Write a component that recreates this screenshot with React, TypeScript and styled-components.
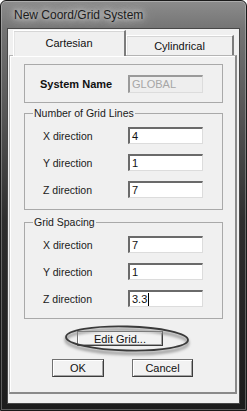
import React from "react";
import styled, { createGlobalStyle } from "styled-components";

const Global = createGlobalStyle`
  html, body { margin: 0; padding: 0; background: #ffffff; }
  body { font-family: "Liberation Sans", Arial, sans-serif; }
  * { box-sizing: border-box; }
`;

const Window = styled.div`
  width: 247px;
  height: 411px;
  border: 1px solid #1a1a1a;
  border-radius: 6px 6px 0 0;
  background: linear-gradient(
    to bottom,
    #8c8c8c 0px,
    #747474 28px,
    #5a5a5a 100px,
    #2e2e2e 220px,
    #1c1c1c 100%
  );
  box-shadow: inset 0 0 0 1px rgba(255, 255, 255, 0.28);
  padding: 0 6px 6px;
  display: flex;
  flex-direction: column;
`;

const TitleBar = styled.div`
  height: 27px;
  display: flex;
  align-items: center;
  padding-left: 7px;
  font-size: 12px;
  color: #1c1c1c;
  text-shadow: 0 0 5px #d4d4d4, 0 0 9px #cdcdcd, 0 0 14px #c4c4c4;
`;

const Client = styled.div`
  flex: 1;
  background: #f0f0f0;
  border: 1px solid #484848;
  display: flex;
  flex-direction: column;
  padding: 0 2px 9px 1px;
`;

const TabStrip = styled.div`
  height: 26px;
  display: flex;
  align-items: flex-end;
  padding-left: 4px;
  position: relative;
  z-index: 1;
`;

const Tab = styled.div<{ $active?: boolean; $w: number }>`
  width: ${(p) => p.$w}px;
  height: ${(p) => (p.$active ? 26 : 20)}px;
  margin-bottom: ${(p) => (p.$active ? -1 : 0)}px;
  background: #f0f0f0;
  border-top: 1px solid #ffffff;
  border-left: 1px solid #ffffff;
  border-right: 2px solid #7c7c7c;
  box-shadow: inset 0 1px 0 #d6d6d6, inset 1px 0 0 #e4e4e4;
  display: flex;
  align-items: center;
  justify-content: center;
  font-size: 11px;
  color: #111;
  padding-bottom: ${(p) => (p.$active ? 1 : 0)}px;
`;

const Panel = styled.div`
  flex: 1;
  border-top: 1px solid #b4b4b4;
  border-left: 1px solid #b4b4b4;
  border-right: 2px solid #8a8a8a;
  border-bottom: 2px solid #8a8a8a;
  box-shadow: inset 1px 1px 0 #ffffff;
  padding: 8px 0 0 14px;
  display: flex;
  flex-direction: column;
  align-items: flex-start;
`;

const NameGroup = styled.div`
  width: 199px;
  height: 39px;
  border: 1px solid #a9a9a9;
  display: flex;
  align-items: center;
  padding-left: 15px;
`;

const BoldLabel = styled.span`
  width: 88px;
  font-size: 11px;
  font-weight: bold;
  color: #111;
`;

const Group = styled.fieldset<{ $top: number }>`
  width: 199px;
  margin: ${(p) => p.$top}px 0 0 0;
  padding: 7px 0 11px 18px;
  border: 1px solid #a9a9a9;
  min-width: 0;
  display: flex;
  flex-direction: column;
  gap: 10px;
`;

const Legend = styled.legend`
  font-size: 10.5px;
  line-height: 13px;
  color: #1a1a1a;
  padding: 0 1px;
  margin-left: -10px;
`;

const Row = styled.div`
  display: flex;
  align-items: center;
  height: 17px;
`;

const Label = styled.span`
  width: 85px;
  font-size: 10.5px;
  color: #1a1a1a;
`;

const Field = styled.div<{ $disabled?: boolean }>`
  width: 75px;
  height: ${(p) => (p.$disabled ? 18 : 17)}px;
  border-top: 2px solid ${(p) => (p.$disabled ? "#9a9a9a" : "#6a6a6a")};
  border-left: 2px solid ${(p) => (p.$disabled ? "#9a9a9a" : "#6a6a6a")};
  border-right: 1px solid #dcdcdc;
  border-bottom: 1px solid #dcdcdc;
  background: ${(p) => (p.$disabled ? "#eeeeee" : "#ffffff")};
  color: ${(p) => (p.$disabled ? "#a6a6a6" : "#111")};
  font-size: 11px;
  line-height: 13px;
  padding-left: 2px;
  display: flex;
  align-items: center;
`;

const Caret = styled.span`
  display: inline-block;
  width: 1px;
  height: 13px;
  background: #000;
  margin-left: 1px;
`;

const EditWrap = styled.div`
  position: relative;
  margin: 12px 0 0 53px;
`;

const Button = styled.button<{ $w: number; $h: number }>`
  width: ${(p) => p.$w}px;
  height: ${(p) => p.$h}px;
  padding: 0;
  font-family: "Liberation Sans", Arial, sans-serif;
  font-size: 11px;
  color: #111;
  background: #f2f2f2;
  border: 1px solid #707070;
  border-right-color: #3c3c3c;
  border-bottom-color: #3c3c3c;
  box-shadow: inset 1px 1px 0 #ffffff, inset -1px -1px 0 #a4a4a4;
  display: flex;
  align-items: center;
  justify-content: center;
`;

const Ring = styled.svg`
  position: absolute;
  left: -14px;
  top: -7px;
  width: 128px;
  height: 32px;
  overflow: visible;
  pointer-events: none;
`;

const ButtonRow = styled.div`
  display: flex;
  gap: 28px;
  margin: 13px 0 0 28px;
`;

export default function App() {
  return (
    <>
      <Global />
      <Window>
        <TitleBar>New Coord/Grid System</TitleBar>
        <Client>
          <TabStrip>
            <Tab $active $w={113}>Cartesian</Tab>
            <Tab $w={108}>Cylindrical</Tab>
          </TabStrip>
          <Panel>
            <NameGroup>
              <BoldLabel>System Name</BoldLabel>
              <Field $disabled>GLOBAL</Field>
            </NameGroup>

            <Group $top={4}>
              <Legend>Number of Grid Lines</Legend>
              <Row>
                <Label>X direction</Label>
                <Field>4</Field>
              </Row>
              <Row>
                <Label>Y direction</Label>
                <Field>1</Field>
              </Row>
              <Row>
                <Label>Z direction</Label>
                <Field>7</Field>
              </Row>
            </Group>

            <Group $top={6}>
              <Legend>Grid Spacing</Legend>
              <Row>
                <Label>X direction</Label>
                <Field>7</Field>
              </Row>
              <Row>
                <Label>Y direction</Label>
                <Field>1</Field>
              </Row>
              <Row>
                <Label>Z direction</Label>
                <Field>
                  3.3
                  <Caret />
                </Field>
              </Row>
            </Group>

            <EditWrap>
              <Button $w={86} $h={15}>Edit Grid...</Button>
              <Ring viewBox="0 0 128 32">
                <defs>
                  <filter id="soft" x="-20%" y="-50%" width="140%" height="200%">
                    <feGaussianBlur stdDeviation="1.6" />
                  </filter>
                </defs>
                <ellipse
                  cx="64"
                  cy="17.5"
                  rx="61"
                  ry="12"
                  fill="none"
                  stroke="#8a8a8a"
                  strokeWidth="2.5"
                  filter="url(#soft)"
                  transform="rotate(1.5 64 15)"
                />
                <ellipse
                  cx="64"
                  cy="14.5"
                  rx="61"
                  ry="12"
                  fill="none"
                  stroke="#3a3a3a"
                  strokeWidth="1.8"
                  transform="rotate(1.5 64 15)"
                />
              </Ring>
            </EditWrap>

            <ButtonRow>
              <Button $w={52} $h={18}>OK</Button>
              <Button $w={61} $h={18}>Cancel</Button>
            </ButtonRow>
          </Panel>
        </Client>
      </Window>
    </>
  );
}
